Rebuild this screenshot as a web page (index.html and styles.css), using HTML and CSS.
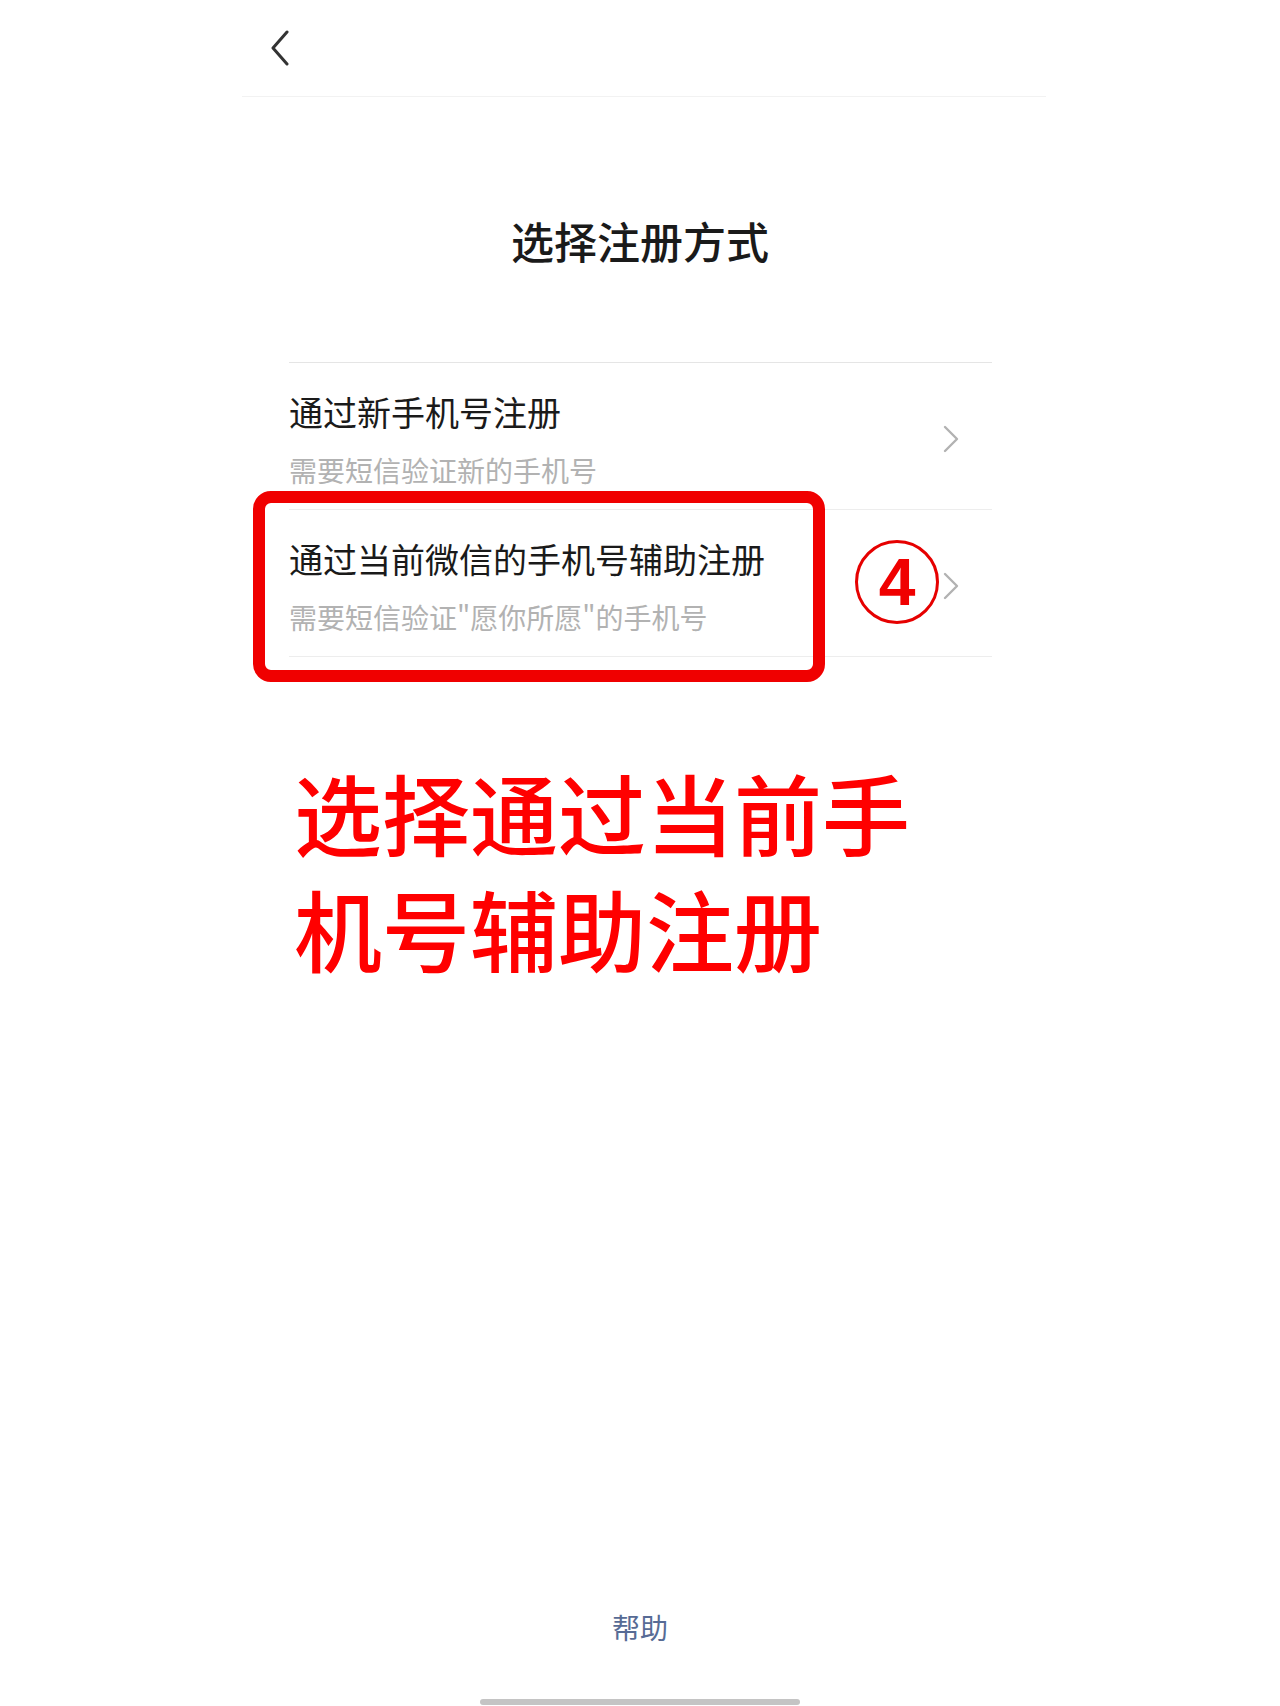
FILE: index.html
```html
<!DOCTYPE html>
<html lang="zh-CN">
<head>
    <meta charset="UTF-8">
    <meta name="viewport" content="width=device-width, initial-scale=1.0">
    <title>选择注册方式</title>
    <link rel="stylesheet" href="styles.css">
</head>
<body>
    <div class="page">
        <div class="header">
            <svg class="back-icon" width="20" height="36" viewBox="0 0 20 36">
                <path d="M17 2 L3 18 L17 34" fill="none" stroke="#333" stroke-width="3" stroke-linecap="round" stroke-linejoin="round"/>
            </svg>
        </div>

        <h1 class="page-title">选择注册方式</h1>

        <div class="option-list">
            <div class="option-item">
                <div class="option-text">
                    <div class="option-title">通过新手机号注册</div>
                    <div class="option-desc">需要短信验证新的手机号</div>
                </div>
                <svg class="arrow-icon" width="16" height="28" viewBox="0 0 16 28">
                    <path d="M2 2 L14 14 L2 26" fill="none" stroke="#b2b2b2" stroke-width="2.4" stroke-linecap="round" stroke-linejoin="round"/>
                </svg>
            </div>
            <div class="option-item">
                <div class="option-text">
                    <div class="option-title">通过当前微信的手机号辅助注册</div>
                    <div class="option-desc">需要短信验证"愿你所愿"的手机号</div>
                </div>
                <svg class="arrow-icon" width="16" height="28" viewBox="0 0 16 28">
                    <path d="M2 2 L14 14 L2 26" fill="none" stroke="#b2b2b2" stroke-width="2.4" stroke-linecap="round" stroke-linejoin="round"/>
                </svg>
                <!-- annotation marks -->
                <div class="mark-box"></div>
                <div class="mark-step">4</div>
            </div>
        </div>

        <div class="mark-note">选择通过当前手<br>机号辅助注册</div>

        <div class="footer">
            <div class="help-link">帮助</div>
            <div class="home-bar"></div>
        </div>
    </div>
</body>
</html>
```

FILE: styles.css
```css
body, html {
    margin: 0;
    padding: 0;
    background-color: #ffffff;
    font-family: "Noto Sans CJK SC", "Noto Sans", sans-serif;
    color: #1a1a1a;
}

.page {
    width: 804px;
    height: 1706px;
    margin-left: 242px;
    display: flex;
    flex-direction: column;
    overflow: hidden;
}

.header {
    height: 96px;
    border-bottom: 1px solid #f2f2f2;
    display: flex;
    align-items: center;
    padding-left: 28px;
}

.back-icon {
    display: block;
}

.page-title {
    margin: 113px 8px 0 0;
    height: 60px;
    line-height: 60px;
    font-size: 43px;
    font-weight: 500;
    text-align: center;
    color: #1a1a1a;
}

.option-list {
    margin: 92px 54px 0 47px;
    border-top: 1px solid #e5e5e5;
}

.option-item {
    position: relative;
    display: flex;
    align-items: center;
    justify-content: space-between;
    padding: 27px 0 21px 0;
    border-bottom: 1px solid #ededed;
}

.option-title {
    font-size: 34px;
    line-height: 44px;
    color: #1a1a1a;
}

.option-desc {
    margin-top: 18px;
    font-size: 28px;
    line-height: 36px;
    color: #b2b2b2;
}

.arrow-icon {
    display: block;
    margin-right: 33px;
}

.mark-box {
    position: absolute;
    left: -36px;
    top: -19px;
    width: 572px;
    height: 191px;
    box-sizing: border-box;
    border: 12px solid #f00000;
    border-radius: 18px;
}

.mark-step {
    position: absolute;
    left: 566px;
    top: 30px;
    width: 84px;
    height: 84px;
    box-sizing: border-box;
    border: 3px solid #e60000;
    border-radius: 50%;
    display: flex;
    align-items: center;
    justify-content: center;
    font-family: "Liberation Sans", Arial, sans-serif;
    font-size: 66px;
    font-weight: bold;
    color: #f00000;
}

.mark-note {
    margin: 96px 0 0 52px;
    font-size: 88px;
    line-height: 116px;
    font-weight: 500;
    color: #ff0000;
}

.footer {
    margin-top: auto;
    display: flex;
    flex-direction: column;
    align-items: center;
    margin-left: -8px;
}

.help-link {
    font-size: 28px;
    line-height: 40px;
    color: #576b95;
}

.home-bar {
    margin-top: 52px;
    margin-bottom: 1px;
    width: 320px;
    height: 6px;
    border-radius: 3px;
    background-color: #c4c4c4;
}
```
